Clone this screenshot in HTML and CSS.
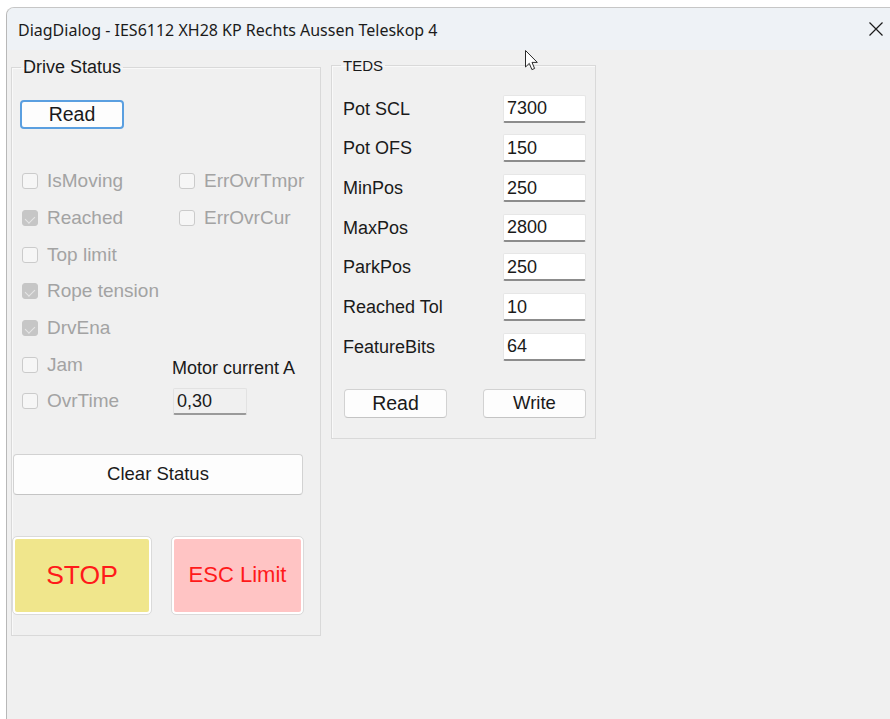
FILE: index.html
```html
<!DOCTYPE html>
<html lang="de">
<head>
<meta charset="utf-8">
<title>DiagDialog</title>
<link rel="stylesheet" href="styles.css">
</head>
<body>
<div class="window">
  <div class="titlebar">
    <span class="title">DiagDialog - IES6112 XH28 KP Rechts Aussen Teleskop 4</span>
    <svg class="close" width="16" height="16" viewBox="0 0 16 16"><path d="M1.5 1.5L14.5 14.5M14.5 1.5L1.5 14.5" stroke="#1b1b1b" stroke-width="1.2" fill="none"/></svg>
  </div>
  <div class="client">
    <fieldset class="group drive">
      <legend>Drive Status</legend>
      <button class="btn btn-focus read-drive">Read</button>
      <div class="status-grid">
        <label class="chk r1 c1"><span class="box"></span>IsMoving</label>
        <label class="chk r1 c2"><span class="box"></span>ErrOvrTmpr</label>
        <label class="chk r2 c1"><span class="box on"></span>Reached</label>
        <label class="chk r2 c2"><span class="box"></span>ErrOvrCur</label>
        <label class="chk r3 c1"><span class="box"></span>Top limit</label>
        <label class="chk r4 c1"><span class="box on"></span>Rope tension</label>
        <label class="chk r5 c1"><span class="box on"></span>DrvEna</label>
        <label class="chk r6 c1"><span class="box"></span>Jam</label>
        <span class="motor-label r6 c2">Motor current A</span>
        <label class="chk r7 c1"><span class="box"></span>OvrTime</label>
        <span class="field readonly motor-value r7 c2">0,30</span>
      </div>
      <button class="btn clear">Clear Status</button>
      <div class="big-buttons">
        <button class="big stop">STOP</button>
        <button class="big esc">ESC Limit</button>
      </div>
    </fieldset>
    <fieldset class="group teds">
      <legend>TEDS</legend>
      <div class="teds-rows">
        <div class="teds-row"><span>Pot SCL</span><span class="field">7300</span></div>
        <div class="teds-row"><span>Pot OFS</span><span class="field">150</span></div>
        <div class="teds-row"><span>MinPos</span><span class="field">250</span></div>
        <div class="teds-row"><span>MaxPos</span><span class="field">2800</span></div>
        <div class="teds-row"><span>ParkPos</span><span class="field">250</span></div>
        <div class="teds-row"><span>Reached Tol</span><span class="field">10</span></div>
        <div class="teds-row"><span>FeatureBits</span><span class="field">64</span></div>
      </div>
      <div class="teds-buttons">
        <button class="btn small">Read</button>
        <button class="btn small">Write</button>
      </div>
    </fieldset>
  </div>
  <svg class="cursor" width="14" height="22" viewBox="0 0 14 22"><path d="M0.5 0.5 L0.5 17 L4.3 13.4 L6.9 19.6 L9.6 18.5 L7 12.4 L12.3 12.4 Z" fill="#ffffff" stroke="#2a2a2a" stroke-width="1" stroke-linejoin="round"/></svg>
</div>
</body>
</html>
```

FILE: styles.css
```css
* { box-sizing: border-box; }

html, body {
  margin: 0;
  padding: 0;
  background: #ffffff;
  height: 100%;
  overflow: hidden;
}

body {
  font-family: "Liberation Sans", Arial, sans-serif;
  color: #1a1a1a;
}

.window {
  position: relative;
  margin: 7px 0 0 6px;
  height: calc(100vh - 7px);
  border-top: 1px solid #c6c6c6;
  border-left: 1px solid #b8b8b8;
  border-top-left-radius: 8px;
  background: #f0f0f0;
  overflow: hidden;
  display: flex;
  flex-direction: column;
}

/* caption bar */
.titlebar {
  height: 42px;
  flex: none;
  background: #eef2f6;
  display: flex;
  align-items: center;
  justify-content: space-between;
  padding: 0 6px 0 11px;
}

.title {
  font-family: "Noto Sans", "Open Sans", sans-serif;
  font-size: 16px;
  color: #1b1b1b;
  margin-top: 1px;
}

.close { display: block; }

/* dialog body */
.client {
  flex: 1;
  display: flex;
  align-items: flex-start;
  gap: 10px;
  padding: 8px 0 0 4px;
}

.group {
  margin: 0;
  border: 1px solid #d9d9d9;
  box-shadow: inset 1px 1px 0 #f9f9f9;
  border-radius: 0;
}

.group legend {
  padding: 0 2px;
  color: #1a1a1a;
}

.drive {
  width: 310px;
  padding: 0 0 21px 0;
}

.drive legend {
  font-size: 18px;
  line-height: 18px;
  margin-left: 9px;
}

.teds {
  width: 265px;
  padding: 0 9px 20px 11px;
}

.teds legend {
  font-size: 15px;
  line-height: 15px;
  margin-left: -2px;
}

/* push buttons */
.btn {
  font-family: "Liberation Sans", Arial, sans-serif;
  font-size: 18.5px;
  color: #1a1a1a;
  background: #fdfdfd;
  border: 1px solid #d2d2d2;
  border-bottom-color: #c4c4c4;
  border-radius: 4px;
  padding: 0;
  display: block;
}

.btn-focus {
  border: 2px solid #5a9fe0;
}

.read-drive {
  width: 104px;
  height: 29px;
  margin: 24px 0 0 8px;
  font-size: 19.5px;
}

.status-grid {
  display: grid;
  grid-template-columns: 150px 1fr;
  grid-template-rows: repeat(7, 36.7px);
  margin: 34px 0 0 10px;
}

.r1 { grid-row: 1; }
.r2 { grid-row: 2; }
.r3 { grid-row: 3; }
.r4 { grid-row: 4; }
.r5 { grid-row: 5; }
.r6 { grid-row: 6; }
.r7 { grid-row: 7; }
.c1 { grid-column: 1; }
.c2 { grid-column: 2; }

.chk {
  display: flex;
  align-items: center;
  gap: 9px;
  font-size: 19px;
  color: #a3a3a3;
  white-space: nowrap;
}

.chk.c2 { margin-left: 7px; }

.box {
  width: 16px;
  height: 16px;
  flex: none;
  border: 1px solid #cbcbcb;
  border-radius: 3px;
  background: #f6f6f6;
  position: relative;
}

.box.on {
  background: #c6c6c6;
  border-color: #c6c6c6;
}

.box.on::after {
  content: "";
  position: absolute;
  left: 4px;
  top: 3px;
  width: 5px;
  height: 8px;
  border-right: 1px solid #e6e6e6;
  border-bottom: 1px solid #e6e6e6;
  transform: rotate(45deg);
}

.motor-label {
  align-self: center;
  margin-top: 8px;
  font-size: 18px;
  white-space: nowrap;
}

/* edit boxes */
.field {
  display: flex;
  align-items: center;
  height: 28px;
  padding: 1px 0 0 3px;
  font-size: 18px;
  background: #ffffff;
  border: 1px solid #e6e6e6;
  border-bottom: 2px solid #8c8c8c;
  border-radius: 2px;
}

.field.readonly {
  background: #f0f0f0;
  border-color: #e2e2e2;
  border-bottom-color: #9a9a9a;
}

.motor-value {
  width: 74px;
  height: 27px;
  margin-left: 1px;
  align-self: center;
}

.clear {
  width: 290px;
  height: 41px;
  margin: 34px 0 0 1px;
}

.big-buttons {
  display: flex;
  gap: 21px;
  margin: 42px 0 0 1px;
}

.big {
  height: 77px;
  font-family: "Liberation Sans", Arial, sans-serif;
  color: #ff1a1a;
  border: 2px solid #ffffff;
  outline: 1px solid #dadada;
  border-radius: 4px;
  padding: 0;
}

.stop {
  width: 138px;
  background: #f0e68c;
  font-size: 26.5px;
}

.esc {
  width: 131px;
  background: #ffc4c4;
  font-size: 22px;
}

/* TEDS rows */
.teds-rows {
  margin-top: 16px;
  display: grid;
  grid-template-rows: repeat(7, 39.67px);
}

.teds-row {
  display: flex;
  align-items: center;
  justify-content: space-between;
  font-size: 18px;
}

.teds-row > span:first-child { margin-top: 1px; }

.teds-row .field { width: 83px; }

.teds-buttons {
  display: flex;
  justify-content: space-between;
  margin-top: 22px;
  padding-left: 1px;
}

.btn.small {
  width: 103px;
  height: 29px;
}

.teds-buttons .btn.small:first-child { font-size: 19.5px; }

.cursor {
  position: absolute;
  left: 518px;
  top: 42px;
}
```
